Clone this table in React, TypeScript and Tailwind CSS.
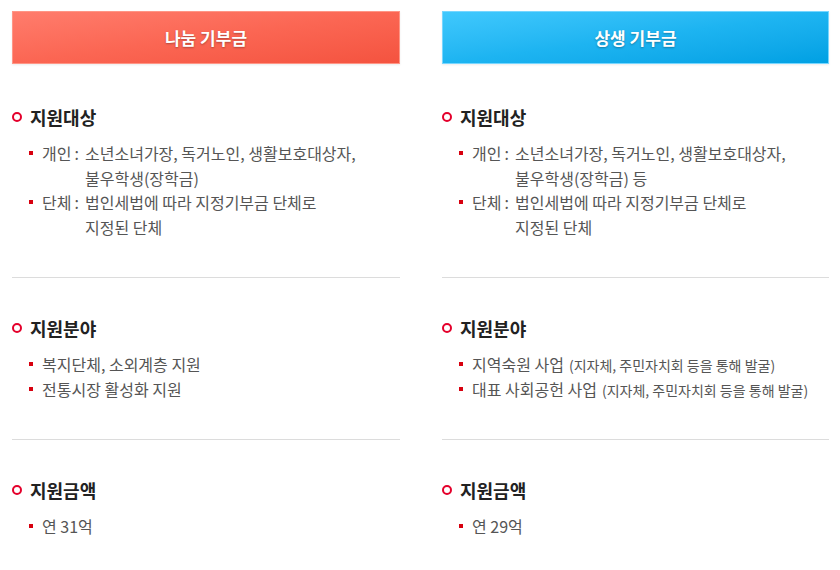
type Item = { label?: string; lines: string[]; note?: string };
type Section = { title: string; items: Item[] };
type Column = { title: string; tone: "red" | "blue"; sections: Section[] };

const columns: Column[] = [
  {
    title: "나눔 기부금",
    tone: "red",
    sections: [
      {
        title: "지원대상",
        items: [
          { label: "개인", lines: ["소년소녀가장, 독거노인, 생활보호대상자,", "불우학생(장학금)"] },
          { label: "단체", lines: ["법인세법에 따라 지정기부금 단체로", "지정된 단체"] },
        ],
      },
      {
        title: "지원분야",
        items: [{ lines: ["복지단체, 소외계층 지원"] }, { lines: ["전통시장 활성화 지원"] }],
      },
      { title: "지원금액", items: [{ lines: ["연 31억"] }] },
    ],
  },
  {
    title: "상생 기부금",
    tone: "blue",
    sections: [
      {
        title: "지원대상",
        items: [
          { label: "개인", lines: ["소년소녀가장, 독거노인, 생활보호대상자,", "불우학생(장학금) 등"] },
          { label: "단체", lines: ["법인세법에 따라 지정기부금 단체로", "지정된 단체"] },
        ],
      },
      {
        title: "지원분야",
        items: [
          { lines: ["지역숙원 사업"], note: "(지자체, 주민자치회 등을 통해 발굴)" },
          { lines: ["대표 사회공헌 사업"], note: "(지자체, 주민자치회 등을 통해 발굴)" },
        ],
      },
      { title: "지원금액", items: [{ lines: ["연 29억"] }] },
    ],
  },
];

function Header({ title, tone }: { title: string; tone: "red" | "blue" }) {
  const bg =
    tone === "red"
      ? "bg-linear-to-br from-[#ff7c6c] via-[#fb6653] to-[#f4533f] border-[#ff9585]"
      : "bg-linear-to-br from-[#3fc8fd] via-[#1db4f1] to-[#00a0e3] border-[#76d6ff]";
  return (
    <div
      className={`h-[53px] flex items-center justify-center border ${bg} shadow-[0_1px_2px_rgba(0,0,0,0.08)]`}
    >
      <span className="text-white text-[17px] font-bold [text-shadow:0_1px_2px_rgba(0,0,0,0.3)]">
        {title}
      </span>
    </div>
  );
}

function ListItem({ item }: { item: Item }) {
  return (
    <li className="flex leading-[24.5px] text-[16px] text-[#555]">
      <span className="w-[18px] flex items-center shrink-0 pl-[5px] h-[24.5px]">
        <span className="block w-[4px] h-[4px] bg-[#d7000f]" />
      </span>
      {item.label && (
        <span className="shrink-0 w-[43px] whitespace-nowrap">
          {item.label}
          <span className="ml-[3px]">:</span>
        </span>
      )}
      <div className="flex flex-col">
        {item.lines.map((line, i) => (
          <div key={i} className="h-[24.5px] flex items-baseline whitespace-nowrap">
            {line}
            {item.note && i === item.lines.length - 1 && (
              <span className="text-[14px] ml-[5px]">{item.note}</span>
            )}
          </div>
        ))}
      </div>
    </li>
  );
}

function SectionBlock({ section, last }: { section: Section; last: boolean }) {
  return (
    <div className={`pt-[38px] pb-[38px] ${last ? "" : "border-b border-[#dcdcdc]"}`}>
      <h3 className="flex items-center gap-[8px] h-[24px] text-[18px] font-bold text-[#222]">
        <span className="w-[10px] h-[10px] rounded-full border-2 border-[#e4002b]" />
        {section.title}
      </h3>
      <ul className="mt-[12px] pl-[12px]">
        {section.items.map((item, i) => (
          <ListItem key={i} item={item} />
        ))}
      </ul>
    </div>
  );
}

export default function App() {
  return (
    <div className="w-[840px] h-[570px] bg-white pt-[11px] pl-[12px] pr-[11px] font-['Noto_Sans_CJK_KR','Noto_Sans',sans-serif] overflow-hidden">
      <div className="grid grid-cols-[388px_387px] gap-x-[42px]">
        {columns.map((col) => (
          <div key={col.title}>
            <Header title={col.title} tone={col.tone} />
            <div className="mt-[3px]">
              {col.sections.map((s, i) => (
                <SectionBlock key={s.title} section={s} last={i === col.sections.length - 1} />
              ))}
            </div>
          </div>
        ))}
      </div>
    </div>
  );
}
